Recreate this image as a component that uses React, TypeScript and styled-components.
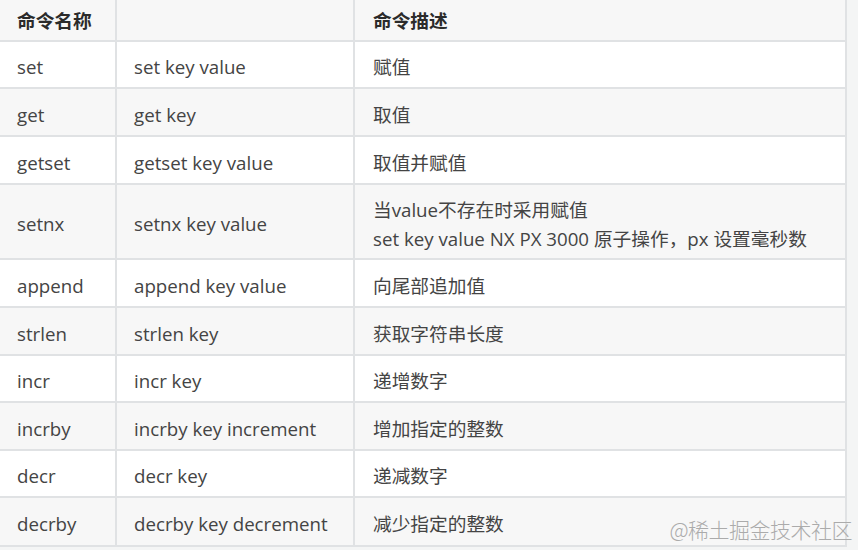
import { createGlobalStyle, styled } from "styled-components";

// DATA
type Row = {
  name: string;
  usage: string;
  desc: string[];
  height: number;
};

const rows: Row[] = [
  { name: "set", usage: "set key value", desc: ["赋值"], height: 47 },
  { name: "get", usage: "get key", desc: ["取值"], height: 48 },
  { name: "getset", usage: "getset key value", desc: ["取值并赋值"], height: 48 },
  {
    name: "setnx",
    usage: "setnx key value",
    desc: ["当value不存在时采用赋值", "set key value NX PX 3000 原子操作，px 设置毫秒数"],
    height: 75,
  },
  { name: "append", usage: "append key value", desc: ["向尾部追加值"], height: 48 },
  { name: "strlen", usage: "strlen key", desc: ["获取字符串长度"], height: 48 },
  { name: "incr", usage: "incr key", desc: ["递增数字"], height: 47 },
  { name: "incrby", usage: "incrby key increment", desc: ["增加指定的整数"], height: 48 },
  { name: "decr", usage: "decr key", desc: ["递减数字"], height: 47 },
  { name: "decrby", usage: "decrby key decrement", desc: ["减少指定的整数"], height: 47 },
];

// STYLE
const GlobalStyle = createGlobalStyle`
  html, body {
    margin: 0;
    padding: 0;
    background: #ffffff;
  }
  body {
    font-family: "Open Sans", "Noto Sans CJK SC", sans-serif;
    color: #333333;
  }
`;

const Page = styled.div`
  position: relative;
  width: 858px;
  height: 550px;
  overflow: hidden;
  background: #f4f5f5;
`;

const Table = styled.div`
  width: 845px;
  border-right: 2px solid #e0e2e4;
  border-bottom: 2px solid #e0e2e4;
  background: #ffffff;
`;

const TableRow = styled.div<{ $h: number; $striped: boolean }>`
  display: grid;
  grid-template-columns: 117px 238px 1fr;
  height: ${(p) => p.$h}px;
  box-sizing: border-box;
  border-bottom: 2px solid #e0e2e4;
  background: ${(p) => (p.$striped ? "#f7f7f7" : "#ffffff")};

  &:last-child {
    border-bottom: none;
  }
`;

const Cell = styled.div<{ $head?: boolean }>`
  display: flex;
  flex-direction: column;
  justify-content: center;
  padding-left: 17px;
  padding-top: ${(p) => (p.$head ? 0 : 4)}px;
  font-size: 18.7px;
  line-height: 29px;
  font-weight: ${(p) => (p.$head ? 700 : 400)};
  color: ${(p) => (p.$head ? "#2b2b2b" : "#444444")};
  white-space: nowrap;
  border-right: 2px solid #e0e2e4;

  &:last-child {
    border-right: none;
    padding-left: 18px;
  }
`;

const Watermark = styled.div`
  position: absolute;
  right: 6px;
  bottom: 6px;
  font-family: "Noto Sans CJK SC", sans-serif;
  font-size: 21px;
  font-weight: 300;
  color: #ababab;
  letter-spacing: -0.5px;
`;

function App() {
  return (
    <Page>
      <GlobalStyle />
      <Table>
        <TableRow $h={42} $striped>
          <Cell $head>命令名称</Cell>
          <Cell $head></Cell>
          <Cell $head>命令描述</Cell>
        </TableRow>
        {rows.map((r, i) => (
          <TableRow key={r.name} $h={r.height} $striped={i % 2 === 1}>
            <Cell>{r.name}</Cell>
            <Cell>{r.usage}</Cell>
            <Cell>
              {r.desc.map((d) => (
                <span key={d}>{d}</span>
              ))}
            </Cell>
          </TableRow>
        ))}
      </Table>
      <Watermark>@稀土掘金技术社区</Watermark>
    </Page>
  );
}

export default App;
